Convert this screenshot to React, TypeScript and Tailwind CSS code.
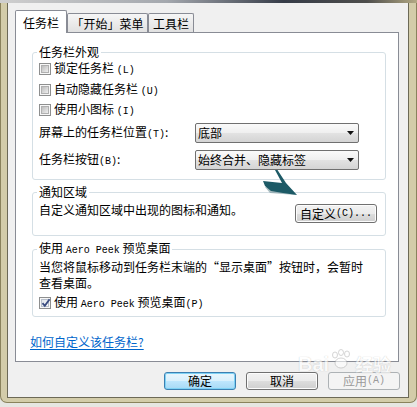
import type { ReactNode } from "react";

const mono = "font-['Liberation_Mono',monospace] text-[10px]";

function CheckBox({ checked = false }: { checked?: boolean }) {
  return (
    <span className="flex h-[12px] w-[12px] shrink-0 border border-[#8e8f8f] bg-[#f7f7f7] p-[1px]">
      <span
        className={`relative flex-1 border ${checked ? 'border-[#b8c0cc] bg-linear-to-br from-[#dfe4ea] to-[#fbfbfb]' : 'border-[#b0b0b0] bg-linear-to-br from-[#bdbdbd] to-[#eeeeee]'}`}
      >
        {checked && (
          <svg className="absolute -top-[2px] -left-[1px]" width="10" height="10" viewBox="0 0 10 10">
            <path d="M1.5 5.2 L3.8 7.8 L8.6 1.2" fill="none" stroke="#3a4c80" strokeWidth="1.9" />
          </svg>
        )}
      </span>
    </span>
  );
}

function Select({ value }: { value: string }) {
  return (
    <div className="flex h-[20px] w-[164px] items-center justify-between rounded-[2px] border border-[#707070] bg-[linear-gradient(#fafafa,#efefef_50%,#e2e2e2_52%,#d4d4d4)] pr-[3px] pl-[2px]">
      <span>{value}</span>
      <svg width="8" height="5" viewBox="0 0 8 5">
        <path d="M0 0 H7 L3.5 4 Z" fill="#111" />
      </svg>
    </div>
  );
}

function Button({ children, kind = 'normal', className = '' }: { children: ReactNode; kind?: 'normal' | 'primary' | 'disabled'; className?: string }) {
  const look =
    kind === 'primary'
      ? 'border-[#3c7fb1] shadow-[inset_0_0_0_1px_#7fd2f5] bg-[linear-gradient(#eaf6fd,#d9f0fc_50%,#bee6fd_52%,#a7d9f5)] text-black'
      : kind === 'disabled'
        ? 'border-[#adb2b5] bg-[#f4f4f4] text-[#9a9a9a]'
        : 'border-[#707070] shadow-[inset_0_0_0_1px_#fcfcfc] bg-[linear-gradient(#f2f2f2,#ebebeb_50%,#dddddd_52%,#cfcfcf)] text-black';
  return (
    <div className={`flex h-[18px] w-[72px] items-center justify-center rounded-[3px] border leading-[14px] ${look} ${className}`}>
      {children}
    </div>
  );
}

export default function App() {
  return (
    <div className="relative h-[407px] w-[417px] overflow-hidden bg-[#e6e6e2] font-['Noto_Sans_CJK_SC',sans-serif] text-[12px] leading-[16px] text-black">
      <div className="h-[3px] bg-[linear-gradient(90deg,#cfcfcf,#a4a8ae_40%,#363c48_68%,#4e4e4c_88%,#b3a984)]" />
      <div className="flex h-[400px] rounded-b-[7px] border-x border-b border-[#8a825c] bg-[#d3cca9] pr-[7px] pb-[4px] pl-[6px]">
        <div className="flex flex-1 flex-col border-x border-b border-[#6c6956] bg-[#f0f0f0]">
          {/* tabs */}
          <div className="relative z-10 mt-[7px] -mb-[1px] flex h-[23px] items-end pl-[7px]">
            <div className="flex h-[23px] w-[52px] items-center justify-center rounded-t-[2px] border-x border-t border-[#898c95] bg-white pt-[2px]">
              任务栏
            </div>
            <div className="mb-[1px] flex h-[19px] w-[81px] items-center justify-center rounded-t-[2px] border-x border-t border-[#898c95] bg-linear-to-b from-[#f6f6f6] to-[#e1e1e1] pt-[1px]">
              「开始」菜单
            </div>
            <div className="mb-[1px] flex h-[19px] w-[46px] items-center justify-center rounded-t-[2px] border-x border-t border-[#898c95] bg-linear-to-b from-[#f6f6f6] to-[#e1e1e1] pt-[1px]">
              工具栏
            </div>
          </div>

          {/* panel */}
          <div className="ml-[7px] flex h-[330px] w-[384px] flex-col border border-[#898c95] bg-white">
            <fieldset className="mt-[11px] ml-[16px] w-[354px] rounded-[3px] border border-[#d5dfe5] pb-[9px]">
              <legend className="ml-[4px] px-[2px] leading-[16px]">任务栏外观</legend>
              <div className="flex flex-col pl-[6px]">
                <div className="mt-[1px] flex h-[16px] items-center gap-[3px]">
                  <CheckBox />
                  <span>锁定任务栏 <span className={mono}>(L)</span></span>
                </div>
                <div className="mt-[5px] flex h-[16px] items-center gap-[3px]">
                  <CheckBox />
                  <span>自动隐藏任务栏 <span className={mono}>(U)</span></span>
                </div>
                <div className="mt-[4px] flex h-[16px] items-center gap-[3px]">
                  <CheckBox />
                  <span>使用小图标 <span className={mono}>(I)</span></span>
                </div>
                <div className="mt-[5px] flex h-[20px] items-center">
                  <span className="w-[156px]">屏幕上的任务栏位置<span className={mono}>(T)</span>:</span>
                  <Select value="底部" />
                </div>
                <div className="mt-[7px] flex h-[20px] items-center">
                  <span className="w-[156px]">任务栏按钮<span className={mono}>(B)</span>:</span>
                  <Select value="始终合并、隐藏标签" />
                </div>
              </div>
            </fieldset>

            <fieldset className="mt-[4px] ml-[16px] w-[354px] rounded-[3px] border border-[#d5dfe5] pb-[12px]">
              <legend className="ml-[4px] px-[2px] leading-[16px]">通知区域</legend>
              <div className="mt-[2px] flex items-start pr-[8px] pl-[6px]">
                <span className="h-[16px] whitespace-nowrap">自定义通知区域中出现的图标和通知。</span>
                <Button className="mt-[2px] ml-auto h-[19px] w-[82px]">
                  自定义<span className={mono}>(C)...</span>
                </Button>
              </div>
            </fieldset>

            <fieldset className="mt-[4px] ml-[16px] w-[354px] rounded-[3px] border border-[#d5dfe5] pb-[5px]">
              <legend className="ml-[4px] px-[2px] leading-[16px]">
                使用 <span className={mono}>Aero Peek</span> 预览桌面
              </legend>
              <div className="flex flex-col pl-[6px]">
                <p className="leading-[16px] whitespace-nowrap">
                  当您将鼠标移动到任务栏末端的“显示桌面”按钮时，会暂时
                  <br />
                  查看桌面。
                </p>
                <div className="mt-[4px] flex h-[16px] items-center gap-[3px]">
                  <CheckBox checked />
                  <span>
                    使用 <span className={mono}>Aero Peek</span> 预览桌面<span className={mono}>(P)</span>
                  </span>
                </div>
              </div>
            </fieldset>

            <a className="mt-[17px] ml-[14px] w-fit leading-[16px] text-[#0066cc] underline underline-offset-2">
              如何自定义该任务栏?
            </a>
          </div>

          {/* dialog buttons */}
          <div className="mt-[10px] flex justify-end gap-[10px] pr-[8px]">
            <Button kind="primary">确定</Button>
            <Button>取消</Button>
            <Button kind="disabled">
              应用<span className={mono}>(A)</span>
            </Button>
          </div>
        </div>
      </div>

      {/* annotation arrow */}
      <svg className="absolute top-[166px] left-[258px]" width="42" height="32" viewBox="0 0 42 32">
        <polygon points="7,21 12,27 25,28 39,29 20,22" fill="#6f9197" opacity="0.6" />
        <polygon points="5,15 24,17 17,4 19.5,4 28,17 39,29 25,27 13,25 7,20" fill="#1d5a66" />
      </svg>

      {/* watermark */}
      <div className="pointer-events-none absolute top-[349px] left-[298px] flex items-end opacity-60">
        <span className="font-['Liberation_Sans',sans-serif] text-[20px] leading-[30px] font-bold text-white [text-shadow:0_0_1px_#9a9a9a]">
          Bai
        </span>
        <svg className="mb-[10px]" width="26" height="20" viewBox="0 0 26 20">
          <g fill="white" stroke="#a8a8a8" strokeWidth="0.8">
            <ellipse cx="6" cy="6" rx="2.5" ry="3" />
            <ellipse cx="12" cy="3.5" rx="2.5" ry="3" />
            <ellipse cx="18" cy="5" rx="2.5" ry="3" />
            <ellipse cx="12" cy="14" rx="6" ry="5" />
          </g>
        </svg>
        <span className="text-[18px] leading-[30px] font-bold text-white [text-shadow:0_0_1px_#9a9a9a]">经验</span>
      </div>
    </div>
  );
}
